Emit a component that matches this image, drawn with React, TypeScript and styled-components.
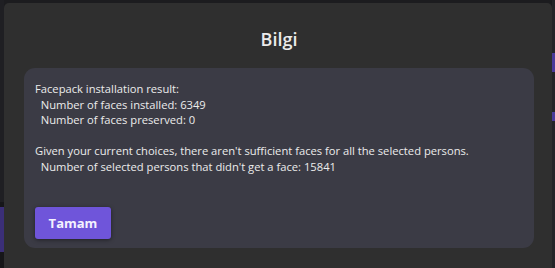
import React, { FC } from "react";
import styled, { createGlobalStyle } from "styled-components";

const GlobalStyle = createGlobalStyle`
	html, body {
		margin: 0;
		padding: 0;
		background: #1c1c1f;
		overflow: hidden;
	}
	body {
		font-family: "Open Sans", "Noto Sans", sans-serif;
	}
`;

// Background app, mostly hidden behind the modal
const Screen = styled.div`
	position: relative;
	width: 555px;
	height: 268px;
	display: grid;
	grid-template-columns: 4px 1fr 3px;
	overflow: hidden;
`;
const SideStrip = styled.div`
	display: flex;
	flex-direction: column;
	padding-top: 42px;
	background: #1f1f23;
`;
const SideItem = styled.div<{ $active?: boolean; $h: number }>`
	height: ${(p) => p.$h}px;
	background: ${(p) => (p.$active ? "#3b2f78" : "transparent")};
`;
const SideGap = styled.div<{ $h: number }>`
	height: ${(p) => p.$h}px;
	background: #161619;
`;
const RightStrip = styled.div`
	display: flex;
	flex-direction: column;
	padding-top: 53px;
	gap: 40px;
	background: #242428;
`;
const RightMark = styled.div<{ $h: number }>`
	height: ${(p) => p.$h}px;
	background: #4a3a9a;
`;

// Modal
const Dialog = styled.div`
	position: absolute;
	left: 4px;
	top: 3px;
	width: 548px;
	height: 280px;
	box-sizing: border-box;
	background: #2f2f2f;
	border-radius: 5px;
	padding: 0 18px 0 20px;
	display: flex;
	flex-direction: column;
`;
const Title = styled.h2`
	margin: 0;
	height: 65px;
	display: flex;
	align-items: center;
	justify-content: center;
	font-size: 18px;
	font-weight: 600;
	color: #ebebeb;
	padding-top: 6px;
	box-sizing: border-box;
`;
const Card = styled.div`
	width: 510px;
	height: 180px;
	box-sizing: border-box;
	background: #3b3b45;
	border-radius: 11px;
	padding: 13px 10px 9px 11px;
	display: flex;
	flex-direction: column;
	justify-content: space-between;
`;
const Message = styled.p`
	margin: 0;
	white-space: pre;
	font-size: 11.2px;
	line-height: 15.5px;
	color: #ececec;
`;
const Button = styled.button`
	align-self: flex-start;
	width: 76px;
	height: 32px;
	border: none;
	border-radius: 3px;
	background: #6f55da;
	color: #f4f2ff;
	font-family: "Open Sans", "Noto Sans", sans-serif;
	font-size: 13px;
	font-weight: 700;
	box-shadow: 0 1px 4px rgba(0, 0, 0, 0.45);
	cursor: pointer;
`;

const message = `Facepack installation result:
  Number of faces installed: 6349
  Number of faces preserved: 0

Given your current choices, there aren't sufficient faces for all the selected persons.
  Number of selected persons that didn't get a face: 15841`;

const App: FC = () => {
	return (
		<>
			<GlobalStyle />
			<Screen>
				<SideStrip>
					<SideItem $h={160} />
					<SideGap $h={5} />
					<SideItem $h={45} $active />
					<SideGap $h={20} />
				</SideStrip>
				<div />
				<RightStrip>
					<RightMark $h={19} />
					<RightMark $h={9} />
				</RightStrip>
				<Dialog>
					<Title>Bilgi</Title>
					<Card>
						<Message>{message}</Message>
						<Button>Tamam</Button>
					</Card>
				</Dialog>
			</Screen>
		</>
	);
};

export default App;
